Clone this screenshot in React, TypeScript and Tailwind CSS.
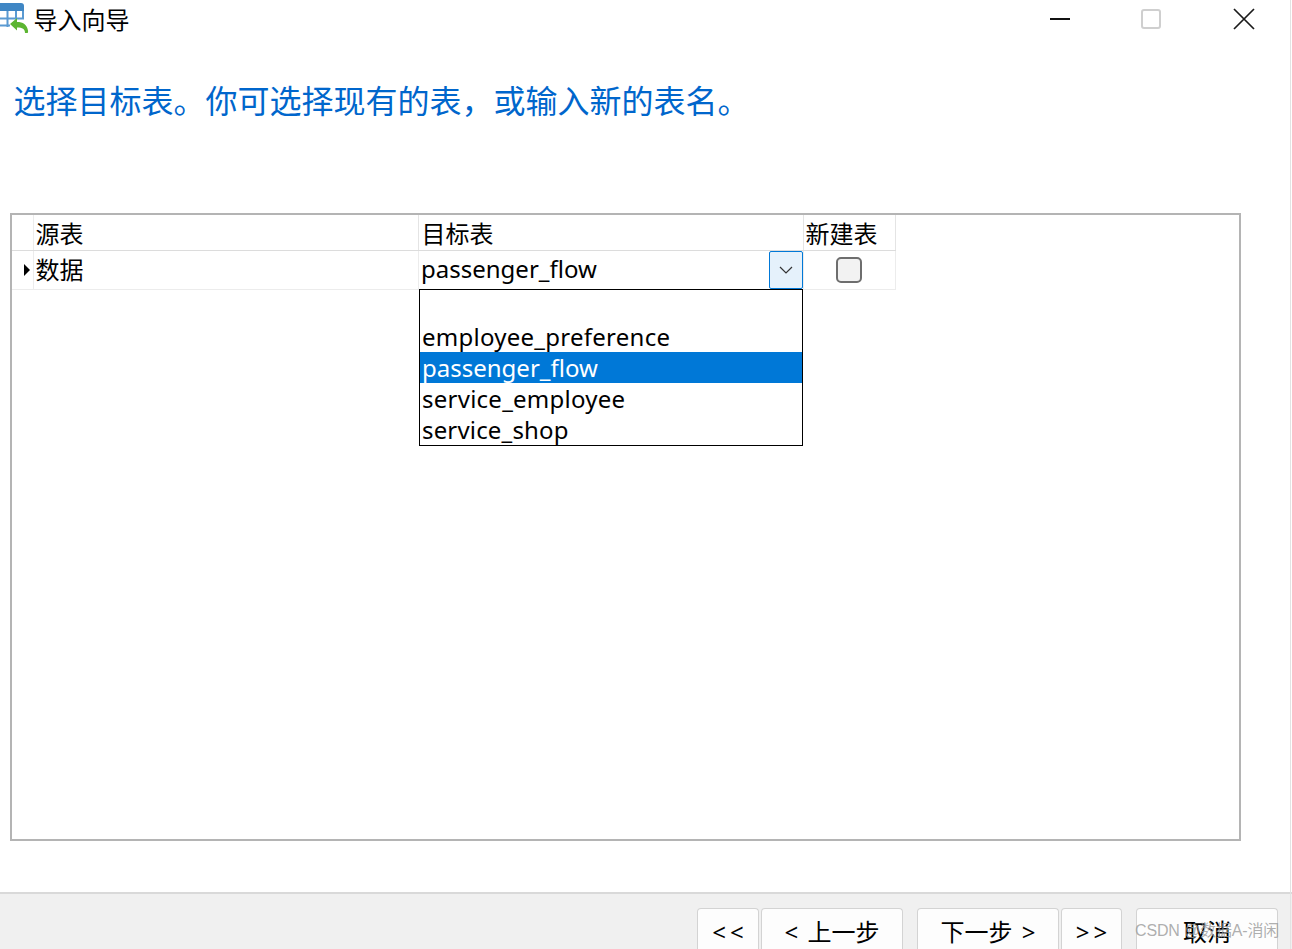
import React from 'react';

const CJK = 'font-["Noto_Sans","Noto_Sans_CJK_SC",sans-serif]';

function TableIcon() {
    return (
        <svg width="30" height="34" viewBox="0 0 30 34" className="shrink-0">
            <path d="M0 3h21a3 3 0 0 1 3 3v5H0z" fill="#3f86c4" />
            <path d="M0 11h24v8H12v8H0z" fill="#fff" />
            <path d="M0 18.500h24M0 25.500h10M7.500 11v16M16 11v8M23 11v8" stroke="#5a9ad2" strokeWidth="2" fill="none" />
            <path d="M10 24l7-6v4c6 0 10 2.500 11 8.500.2 1.500 0 2.500-.5 2.500h-2.500c0-4-2.500-5.500-8-5.500v3z" fill="#5cb531" />
        </svg>
    );
}

function WizardButton({ label, width, className = '' }: { label: string; width: string; className?: string }) {
    return (
        <button className={`${width} ${className} h-[41px] flex justify-center items-start rounded-t-[4px] border border-b-0 border-[#d3d3d3] bg-[#fdfdfd] pt-[6px] text-[24px] leading-[34px] text-black whitespace-pre`}>
            {label}
        </button>
    );
}

export default function App() {
    return (
        <div className={`relative w-[1292px] h-[949px] overflow-hidden flex flex-col bg-white ${CJK}`}>
            {/* Title bar */}
            <div className="h-[38px] flex items-start shrink-0 pr-[37px]">
                <TableIcon />
                <span className="ml-[3.5px] mt-[4px] text-[24px] leading-[32px] text-black">导入向导</span>
                <div className="ml-auto flex items-center mt-[8px] h-[22px]">
                    <div className="w-[20px] h-[2px] bg-[#111]" />
                    <div className="ml-[71px] w-[20px] h-[20px] rounded-[3px] border-2 border-[#cfcfcf]" />
                    <svg width="22" height="22" viewBox="0 0 22 22" className="ml-[72px]">
                        <path d="M1 1l20 20M21 1L1 21" stroke="#1a1a1a" strokeWidth="1.700" fill="none" />
                    </svg>
                </div>
            </div>

            <h1 className="ml-[13.5px] mt-[41px] text-[32px] leading-[44px] font-normal text-[#0066cc] whitespace-nowrap">
                选择目标表。你可选择现有的表，或输入新的表名。
            </h1>

            {/* Grid panel */}
            <div className="relative ml-[10px] mt-[90px] w-[1231px] h-[628px] shrink-0 border-2 border-[#b4b4b4]">
                <div className="w-[884px] flex flex-col text-[24px] text-black">
                    <div className="flex h-[36px] border-b border-[#dcdcdc]">
                        <div className="w-[22px] border-r border-[#ececec]" />
                        <div className="w-[385px] pl-[1.500px] leading-[38px] border-r border-[#e4e4e4]">源表</div>
                        <div className="w-[385px] pl-[2.500px] leading-[38px] border-r border-[#e4e4e4]">目标表</div>
                        <div className="w-[92px] pl-[1.500px] leading-[38px] border-r border-[#e4e4e4]">新建表</div>
                    </div>
                    <div className="flex h-[39px] border-b border-[#ececec]">
                        <div className="w-[22px] border-r border-[#ececec] flex items-center justify-end pr-[3px]">
                            <div className="w-0 h-0 border-y-[6px] border-y-transparent border-l-[6px] border-l-black" />
                        </div>
                        <div className="w-[385px] pl-[1.500px] leading-[37px] border-r border-[#ececec]">数据</div>
                        <div className="w-[385px] pl-[2px] leading-[35px] flex justify-between border-r border-[#ececec]">
                            <span>passenger_flow</span>
                            <div className="w-[34px] h-[38px] flex items-center justify-center rounded-[2px] border border-[#0078d7] bg-[#e5f1fb]">
                                <svg width="14" height="8" viewBox="0 0 14 8">
                                    <path d="M1 1l6 6 6-6" stroke="#333" strokeWidth="1.200" fill="none" />
                                </svg>
                            </div>
                        </div>
                        <div className="w-[92px] border-r border-[#ececec] flex items-center pl-[32px]">
                            <div className="w-[26px] h-[26px] rounded-[5px] border-2 border-[#6e6e6e] bg-[#f2f2f2]" />
                        </div>
                    </div>
                </div>

                {/* Open dropdown list */}
                <div className="absolute left-[407px] top-[74px] w-[384px] h-[157px] border border-black bg-white text-[24px] leading-[31px] text-black">
                    <div className="h-[31px]" />
                    <div className="h-[31px] pl-[2px] tracking-[0.26px]">employee_preference</div>
                    <div className="h-[31px] pl-[2px] bg-[#0078d7] text-white">passenger_flow</div>
                    <div className="h-[31px] pl-[2px] tracking-[0.25px]">service_employee</div>
                    <div className="h-[31px] pl-[2px] tracking-[0.17px]">service_shop</div>
                </div>
            </div>

            {/* Footer */}
            <div className="mt-[51px] flex-1 border-t-2 border-[#d9d9d9] bg-[#f0f0f0] flex items-start pt-[14px] pl-[697px]">
                <WizardButton label="< <" width="w-[62px]" className="[word-spacing:-2px]" />
                <WizardButton label="< 上一步" width="w-[142px]" className="ml-[2px] [word-spacing:3px]" />
                <WizardButton label="下一步 >" width="w-[142px]" className="ml-[14px] [word-spacing:3px]" />
                <WizardButton label="> >" width="w-[61px]" className="ml-[2px] [word-spacing:-2px]" />
                <WizardButton label="取消" width="w-[142px]" className="ml-[14px]" />
            </div>

            <div className="absolute right-[1px] top-0 bottom-0 w-px bg-[#e3e3e3]" />

            {/* Watermark */}
            <span className='absolute left-[1135px] top-[920px] font-["Liberation_Sans","Noto_Sans_CJK_SC",sans-serif] text-[16px] leading-[22px] tracking-[-0.15px] text-[#9a9a9a]/80 whitespace-nowrap'>
                CSDN @数据A-消闲
            </span>
        </div>
    );
}
